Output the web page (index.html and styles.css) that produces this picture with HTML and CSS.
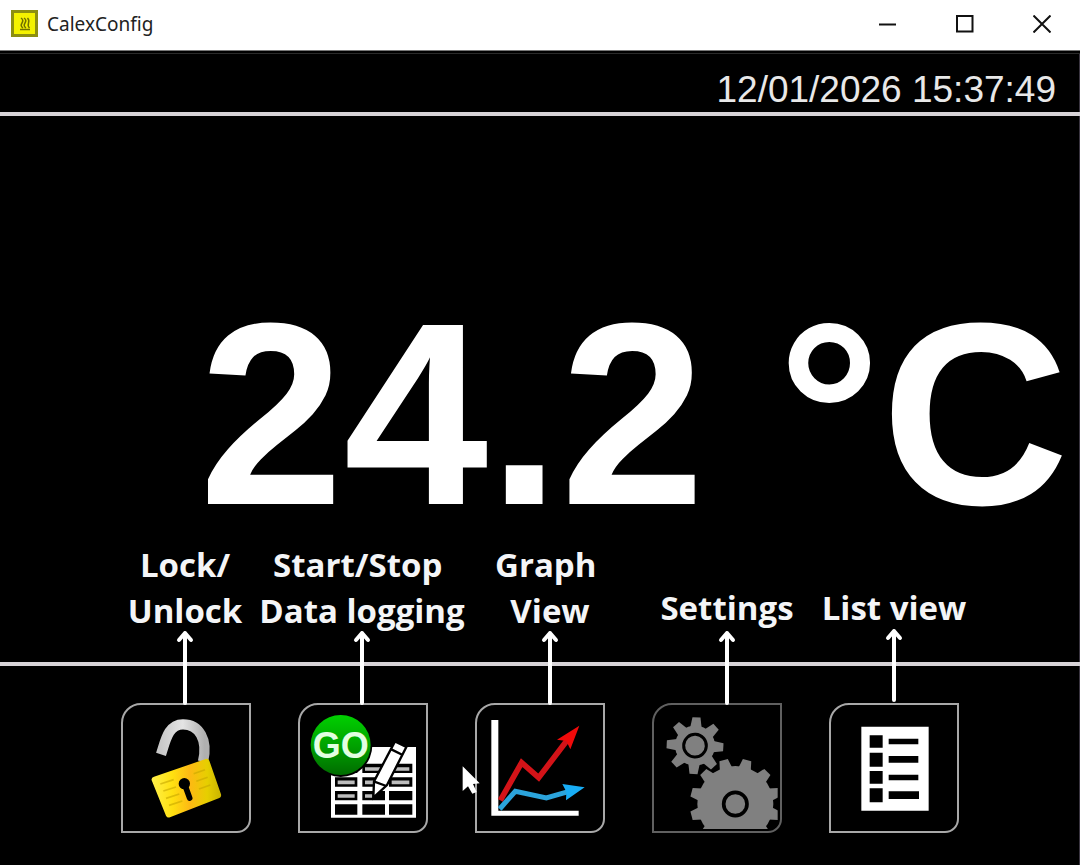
FILE: index.html
```
<!DOCTYPE html>
<html lang="en">
    <head>
        <meta charset="utf-8">
        <meta name="viewport" content="width=device-width, initial-scale=1">
        <title>CalexConfig</title>
        <link rel="stylesheet" href="styles.css">
    </head>
    <body>
        <header class="titlebar">
            <svg class="app-icon" viewBox="0 0 27 27" aria-hidden="true">
                <rect x="1.5" y="1.5" width="24" height="24" fill="#f4f200" stroke="#8d8f10" stroke-width="3"/>
                <path d="M10 8q3 2 1 5t1 5M13 8q3 2 1 5t1 5M16.500 8q2 2 1 5t1 5M9 19.500h10" fill="none" stroke="#6f7000" stroke-width="1.500"/>
            </svg>
            <h1>CalexConfig</h1>
            <div class="window-controls">
                <button type="button" aria-label="Minimise">
                    <svg viewBox="0 0 18 18"><path d="M0 9.500h17"/></svg>
                </button>
                <button type="button" aria-label="Maximise">
                    <svg viewBox="0 0 18 18"><path d="M1 1h15.500v15.500H1z"/></svg>
                </button>
                <button type="button" aria-label="Close">
                    <svg viewBox="0 0 18 18"><path d="M.5.5l17 17M17.500.5l-17 17"/></svg>
                </button>
            </div>
        </header>

        <main class="screen">
            <div class="status">
                <time datetime="2026-01-12T15:37:49">12/01/2026 15:37:49</time>
            </div>

            <div class="reading">24.2 °C</div>

            <div class="toolbar">
                <!-- Captions sit over the divider and point at the buttons -->
                <div class="callouts">
                    <div class="callout">
                        <span id="lock-label">Lock/<br>Unlock</span>
                        <svg class="arrow" viewBox="0 0 18 73"><path d="M9 73V3M3 10l6-7 6 7"/></svg>
                    </div>
                    <div class="callout">
                        <span id="log-label">Start/Stop&nbsp;<br>Data logging</span>
                        <svg class="arrow" viewBox="0 0 18 73"><path d="M9 73V3M3 10l6-7 6 7"/></svg>
                    </div>
                    <div class="callout">
                        <span id="graph-label">Graph&nbsp;<br>View</span>
                        <svg class="arrow" viewBox="0 0 18 73"><path d="M9 73V3M3 10l6-7 6 7"/></svg>
                    </div>
                    <div class="callout single">
                        <span id="settings-label">Settings</span>
                        <svg class="arrow" viewBox="0 0 18 73"><path d="M9 73V3M3 10l6-7 6 7"/></svg>
                    </div>
                    <div class="callout single">
                        <span id="list-label">List view</span>
                        <svg class="arrow" viewBox="0 0 18 73"><path d="M9 70V1M3 8l6-7 6 7"/></svg>
                    </div>
                </div>

                <div class="buttons">
                    <button type="button" class="tool" aria-labelledby="lock-label">
                        <svg viewBox="36 45 378 378">
                            <defs>
                                <linearGradient id="brass" x1="0" y1="0" x2="1" y2="0">
                                    <stop offset="0" stop-color="#fff04a"/>
                                    <stop offset=".3" stop-color="#ffe010"/>
                                    <stop offset=".55" stop-color="#fdb914"/>
                                    <stop offset=".8" stop-color="#e6cf00"/>
                                    <stop offset="1" stop-color="#c9b400"/>
                                </linearGradient>
                                <linearGradient id="steel" x1="0" y1="0" x2="1" y2="0">
                                    <stop offset="0" stop-color="#c8c8c8"/>
                                    <stop offset=".5" stop-color="#e4e4e4"/>
                                    <stop offset="1" stop-color="#b0b0b0"/>
                                </linearGradient>
                            </defs>
                            <path d="M150 193C164 150 172 103 216 103c48 0 76 46 60 112" fill="none" stroke="url(#steel)" stroke-width="31"/>
                            <path d="M129 260l155-53q8-2 11 5l35 101q2 8-5 11l-148 58q-8 3-12-5L122 271q-2-8 7-11z" fill="url(#brass)"/>
                            <path d="M148 282l40-13M157 303l38-12M165 325l40-13M174 346l40-13M248 251l34-12M256 274l34-12M264 297l34-12" stroke="#c7a800" stroke-width="5" opacity=".6"/>
                            <circle cx="220" cy="281" r="17"/>
                            <path d="M222 286l14 38" stroke="#000" stroke-width="17" stroke-linecap="round"/>
                        </svg>
                    </button>

                    <button type="button" class="tool" aria-labelledby="log-label">
                        <svg viewBox="27 45 378 378">
                            <defs>
                                <linearGradient id="go" x1="0" y1="0" x2="0" y2="1">
                                    <stop offset="0" stop-color="#00d000"/>
                                    <stop offset=".5" stop-color="#00a300"/>
                                    <stop offset="1" stop-color="#006c00"/>
                                </linearGradient>
                            </defs>
                            <path d="M120 171h255v212H120z" fill="#fff"/>
                            <path d="M132 221h67v28h-67zM214 221h68v28h-68zM294 221h70v28h-70zM132 262h67v28h-67zM214 262h68v28h-68zM294 262h70v28h-70zM132 303h67v28h-67zM214 303h68v28h-68zM294 303h70v28h-70zM132 343h67v31h-67zM214 343h68v31h-68zM294 343h70v31h-70z"/>
                            <path d="M140 277h51M140 318h51M222 237h50M222 277h50M222 318h22M302 237h53M302 277h53" stroke="#bdbdbd" stroke-width="11"/>
                            <path d="M312 154l34 17-58 114-41 38 2-49z" fill="#fff" stroke="#000" stroke-width="7"/>
                            <path d="M301 178l34 17M250 275l36 13" stroke="#000" stroke-width="7"/>
                            <circle cx="149" cy="166" r="95"/>
                            <circle cx="149" cy="165" r="90" fill="url(#go)"/>
                            <text class="go-text" x="149" y="204" text-anchor="middle">GO</text>
                        </svg>
                    </button>

                    <button type="button" class="tool" aria-labelledby="graph-label">
                        <svg viewBox="66 45 378 378">
                            <path d="M109 90h21v272h241v15H109z" fill="#fff"/>
                            <path d="M136 331l64-113 51 45 90-118" fill="none" stroke="#d31318" stroke-width="17"/>
                            <path d="M373 107l-67 42 28 4 12 25z" fill="#f00a0a"/>
                            <path d="M134 357l47-53 93 20 66-19" fill="none" stroke="#2ba4dc" stroke-width="15"/>
                            <path d="M389 292l-67-10 12 23-1 26z" fill="#18adf5"/>
                        </svg>
                    </button>

                    <button type="button" class="tool dim" aria-labelledby="settings-label">
                        <svg viewBox="42 45 378 378">
                            <defs>
                                <clipPath id="gear-clip"><path d="M42 45h371v372H42z"/></clipPath>
                                <path id="tooth-s" d="M-17-55l5-30h24l5 30v110l-5 30h-24l-5-30z"/>
                                <path id="tooth-l" d="M-19-108l6-28h26l6 28v216l-6 28h-26l-6-28z"/>
                            </defs>
                            <g fill="#808080">
                                <g transform="translate(165 167) rotate(3)">
                                    <circle r="60"/>
                                    <use href="#tooth-s"/>
                                    <use href="#tooth-s" transform="rotate(45)"/>
                                    <use href="#tooth-s" transform="rotate(90)"/>
                                    <use href="#tooth-s" transform="rotate(135)"/>
                                    <circle r="34" stroke="#000" stroke-width="9"/>
                                </g>
                                <g clip-path="url(#gear-clip)">
                                    <g transform="translate(286 342)">
                                        <circle r="114"/>
                                        <use href="#tooth-l" transform="rotate(15)"/>
                                        <use href="#tooth-l" transform="rotate(45)"/>
                                        <use href="#tooth-l" transform="rotate(75)"/>
                                        <use href="#tooth-l" transform="rotate(105)"/>
                                        <use href="#tooth-l" transform="rotate(135)"/>
                                        <use href="#tooth-l" transform="rotate(165)"/>
                                        <circle r="35" stroke="#000" stroke-width="11"/>
                                    </g>
                                </g>
                            </g>
                        </svg>
                    </button>

                    <button type="button" class="tool" aria-labelledby="list-label">
                        <svg viewBox="46 45 378 378">
                            <path d="M137 110h202v252H137z" fill="#fff"/>
                            <path d="M162 136h39v37h-39zM162 188h39v42h-39zM162 243h39v38h-39zM162 295h39v42h-39zM219 146h89v17h-89zM219 198h89v20h-89zM219 254h89v17h-89zM219 304h91v23h-91z"/>
                        </svg>
                    </button>

                    <svg class="cursor" viewBox="0 0 52 84" aria-hidden="true">
                        <path d="M1 1v74l16-14 13 22 13-5-11-24 20-2z" fill="#fff"/>
                    </svg>
                </div>
            </div>
        </main>
    </body>
</html>
```
FILE: styles.css
```
* {
    box-sizing: border-box;
}
body {
    display: flex;
    flex-direction: column;
    min-height: 100vh;
    margin: 0;
    background: #000;
    color: #fff;
    font-family: "Liberation Sans", Arial, sans-serif;
}
button {
    padding: 0;
    background: none;
    border: 0;
}
svg {
    display: block;
}

/* Title bar */
.titlebar {
    display: flex;
    align-items: center;
    height: 51px;
    padding: 0 0 3px 11px;
    background: #fff;
    color: #222;
    border-bottom: 1px solid #777;
}
.app-icon {
    width: 27px;
    height: 27px;
    margin-right: 9px;
}
.titlebar h1 {
    margin: 0;
    font: 400 19px "Noto Sans", "Open Sans", sans-serif;
}
.window-controls {
    display: flex;
    align-self: stretch;
    margin-left: auto;
}
.window-controls button {
    display: flex;
    align-items: center;
    justify-content: center;
    width: 77px;
}
.window-controls svg {
    width: 18px;
    height: 18px;
    fill: none;
    stroke: #111;
    stroke-width: 2;
}

/* Instrument display */
.screen {
    flex: 1;
    display: flex;
    flex-direction: column;
    margin-top: 2px;
    border-top: 1px solid #2a2a2a;
    box-shadow: inset -1px 0 #3a3540;
}
.status {
    padding: 15px 24px 2px;
    border-bottom: 4px solid #d8d4d8;
    color: #e8e8e8;
    font-size: 37px;
    line-height: 41px;
    text-align: right;
}
.reading {
    flex: 1;
    display: flex;
    align-items: center;
    justify-content: flex-end;
    padding: 50px 11px 0 0;
    font-size: 260px;
    font-weight: 700;
    line-height: 300px;
    white-space: nowrap;
}

/* Toolbar */
.toolbar {
    position: relative;
    padding: 37px 0 32px;
    border-top: 4px solid #d8d4d8;
}
.buttons {
    position: relative;
    display: flex;
    justify-content: center;
    gap: 47px;
}
.tool {
    width: 130px;
    height: 130px;
    border: 2px solid #a8a8a8;
    border-radius: 20px 0 14px 0;
    overflow: hidden;
}
.tool.dim {
    border-color: #606060;
}
.tool svg {
    width: 100%;
    height: 100%;
}
.go-text {
    fill: #e2ffe2;
    font: 700 108px "Liberation Sans", Arial, sans-serif;
}
.cursor {
    position: absolute;
    top: 63px;
    left: calc(50% - 78px);
    width: 18px;
    height: 28px;
}

/* Captions */
.callouts {
    position: absolute;
    z-index: 1;
    right: 0;
    bottom: 162px;
    left: 0;
    display: grid;
    grid-template-columns: 146px 208px 168px 186px 148px;
    justify-content: center;
    align-items: end;
}
.callout {
    display: flex;
    flex-direction: column;
    align-items: center;
    color: #f4f5f7;
    font: 700 33px/46px "Open Sans", sans-serif;
    text-align: center;
    white-space: nowrap;
}
.single span {
    padding-bottom: 3px;
}
.arrow {
    width: 18px;
    height: 73px;
    margin-top: -4px;
    fill: none;
    stroke: #fff;
    stroke-width: 4;
    stroke-linecap: round;
    stroke-linejoin: round;
    overflow: visible;
}
```
